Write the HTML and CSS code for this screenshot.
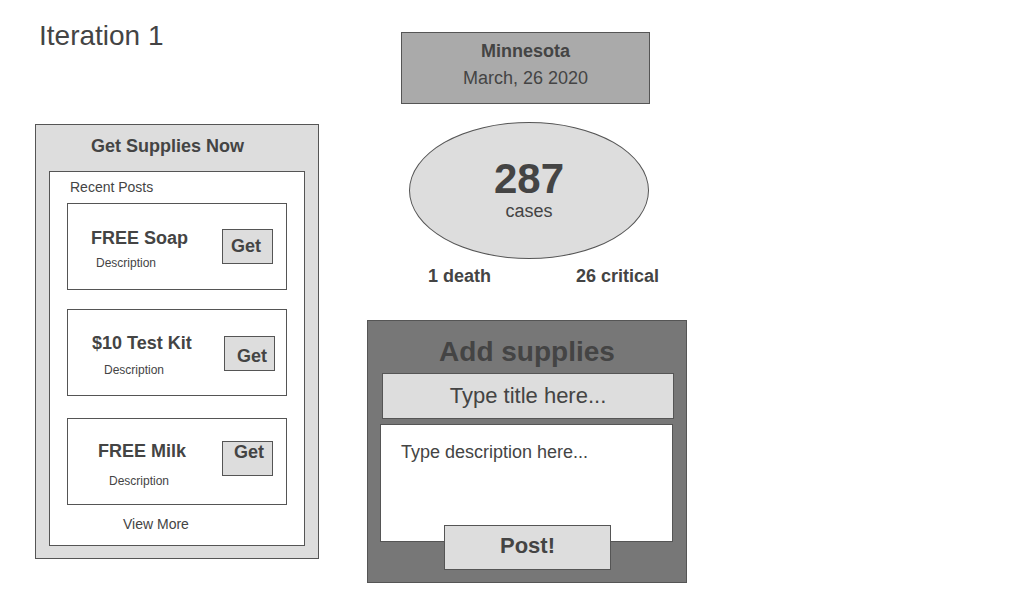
FILE: index.html
```html
<!DOCTYPE html>
<html lang="en">
<head>
    <meta charset="UTF-8" />
    <title>Iteration 1</title>
    <link rel="stylesheet" href="styles.css">
</head>
<body>
<div class="page">
    <div class="left">
        <h1>Iteration 1</h1>

        <div class="supplies">
            <h3>Get Supplies Now</h3>
            <div class="recent">
                <div class="recent-label">Recent Posts</div>

                <div class="post soap">
                    <div class="post-info">
                        <div class="post-title">FREE Soap</div>
                        <div class="post-desc">Description</div>
                    </div>
                    <div class="get">Get</div>
                </div>

                <div class="post kit">
                    <div class="post-info">
                        <div class="post-title">$10 Test Kit</div>
                        <div class="post-desc">Description</div>
                    </div>
                    <div class="get">Get</div>
                </div>

                <div class="post milk">
                    <div class="post-info">
                        <div class="post-title">FREE Milk</div>
                        <div class="post-desc">Description</div>
                    </div>
                    <div class="get">Get</div>
                </div>

                <div class="view-more">View More</div>
            </div>
        </div>
    </div>

    <div class="center">
        <div class="state">
            <div class="state-name">Minnesota</div>
            <div class="state-date">March, 26 2020</div>
        </div>

        <div class="cases">
            <div class="cases-count">287</div>
            <div class="cases-label">cases</div>
        </div>

        <div class="stats">
            <span>1 death</span>
            <span>26 critical</span>
        </div>

        <div class="add">
            <h2>Add supplies</h2>
            <div class="add-title">Type title here...</div>
            <div class="add-desc">Type description here...</div>
            <div class="post-btn">Post!</div>
        </div>
    </div>
</div>
</body>
</html>
```

FILE: styles.css
```css
body {
  margin: 0;
  font-family: "Liberation Sans", Arial, sans-serif;
  color: #444;
  background: #fff;
}
.page {
  display: flex;
  align-items: flex-start;
}

/* left column */
.left {
  margin-left: 35px;
  width: 284px;
}
h1 {
  margin: 20px 0 0 4px;
  font-size: 28px;
  line-height: 32px;
  font-weight: normal;
}
.supplies {
  box-sizing: border-box;
  margin-top: 72px;
  width: 284px;
  height: 435px;
  background: #ddd;
  border: 1px solid #555;
  padding-top: 10px;
}
.supplies h3 {
  margin: 0 0 0 55px;
  font-size: 18px;
  line-height: 22px;
}
.recent {
  box-sizing: border-box;
  margin: 14px 0 0 13px;
  width: 256px;
  height: 375px;
  background: #fff;
  border: 1px solid #555;
  padding-top: 7px;
}
.recent-label {
  margin-left: 20px;
  font-size: 14px;
  line-height: 16px;
}
.post {
  box-sizing: border-box;
  display: flex;
  align-items: flex-start;
  margin-left: 17px;
  width: 220px;
  height: 87px;
  border: 1px solid #555;
}
.post-info {
  padding-left: var(--ix);
  padding-top: var(--iy);
}
.post-title {
  font-size: 18px;
  line-height: 22px;
  font-weight: bold;
  white-space: nowrap;
}
.post-desc {
  margin-left: var(--dx);
  margin-top: var(--dy);
  font-size: 12px;
  line-height: 14px;
}
.get {
  box-sizing: border-box;
  margin-left: auto;
  margin-right: var(--bx);
  margin-top: var(--by);
  width: 51px;
  height: 35px;
  padding: var(--ty) 0 0 var(--tx);
  background: #ddd;
  border: 1px solid #555;
  font-size: 18px;
  line-height: 20px;
  font-weight: bold;
}
.soap {
  margin-top: 8px;
  --ix: 23px; --iy: 23px; --dx: 5px; --dy: 7px;
  --bx: 13px; --by: 25px; --tx: 8px; --ty: 6px;
}
.kit {
  margin-top: 19px;
  --ix: 24px; --iy: 22px; --dx: 12px; --dy: 9px;
  --bx: 11px; --by: 26px; --tx: 12px; --ty: 9px;
}
.milk {
  margin-top: 22px;
  --ix: 30px; --iy: 21px; --dx: 11px; --dy: 12px;
  --bx: 13px; --by: 22px; --tx: 11px; --ty: 0px;
}
.view-more {
  margin: 11px 0 0 73px;
  font-size: 14px;
  line-height: 16px;
}

/* center column */
.center {
  display: flex;
  flex-direction: column;
  align-items: flex-start;
  margin-left: 48px;
  margin-top: 32px;
  width: 320px;
}
.state {
  box-sizing: border-box;
  margin-left: 34px;
  width: 249px;
  height: 72px;
  padding-top: 5px;
  background: #aaa;
  border: 1px solid #555;
  text-align: center;
  font-size: 18px;
  line-height: 27px;
}
.state-name {
  font-weight: bold;
}
.cases {
  box-sizing: border-box;
  margin: 18px 0 0 42px;
  width: 240px;
  height: 137px;
  padding-top: 36px;
  background: #ddd;
  border: 1px solid #555;
  border-radius: 50%;
  text-align: center;
}
.cases-count {
  font-size: 42px;
  line-height: 40px;
  font-weight: bold;
}
.cases-label {
  margin-top: 1px;
  font-size: 18px;
  line-height: 22px;
}
.stats {
  display: flex;
  justify-content: space-between;
  margin: 6px 0 0 61px;
  width: 231px;
  font-size: 18px;
  line-height: 22px;
  font-weight: bold;
}
.add {
  box-sizing: border-box;
  margin-top: 33px;
  width: 320px;
  height: 263px;
  padding-top: 15px;
  background: #777;
  border: 1px solid #555;
}
.add h2 {
  margin: 0;
  font-size: 28px;
  line-height: 32px;
  text-align: center;
}
.add-title {
  box-sizing: border-box;
  margin: 5px 0 0 14px;
  width: 292px;
  height: 46px;
  background: #ddd;
  border: 1px solid #555;
  text-align: center;
  font-size: 22px;
  line-height: 44px;
}
.add-desc {
  box-sizing: border-box;
  margin: 5px 0 0 12px;
  width: 293px;
  height: 118px;
  padding: 16px 0 0 20px;
  background: #fff;
  border: 1px solid #555;
  font-size: 18px;
  line-height: 22px;
}
.post-btn {
  box-sizing: border-box;
  margin: -17px 0 0 76px;
  width: 167px;
  height: 45px;
  background: #ddd;
  border: 1px solid #555;
  text-align: center;
  font-size: 22px;
  line-height: 40px;
  font-weight: bold;
}
```
